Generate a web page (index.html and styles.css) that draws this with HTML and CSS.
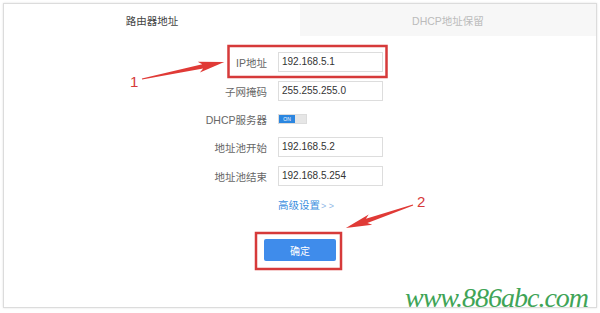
FILE: index.html
```html
<!DOCTYPE html>
<html>
<head>
<meta charset="utf-8">
<link rel="stylesheet" href="styles.css">
</head>
<body>
<div class="page">
  <div class="frame">
    <div class="tabs">
      <div class="tab active">路由器地址</div>
      <div class="tab">DHCP地址保留</div>
    </div>
    <div class="form">
      <label class="lbl">IP地址</label><div class="input">192.168.5.1</div>
      <label class="lbl">子网掩码</label><div class="input">255.255.255.0</div>
      <label class="lbl">DHCP服务器</label><div class="toggle"><span class="on">ON</span></div>
      <label class="lbl">地址池开始</label><div class="input">192.168.5.2</div>
      <label class="lbl">地址池结束</label><div class="input">192.168.5.254</div>
      <span></span><a class="link">高级设置<span class="gt">&gt; &gt;</span></a>
    </div>
    <div class="actions"><button class="btn">确定</button></div>
  </div>
  <svg class="annot" width="600" height="313" viewBox="0 0 600 313">
    <rect x="228.5" y="46" width="158" height="31" fill="none" stroke="#d63a3a" stroke-width="2.5"/>
    <rect x="256" y="233" width="85" height="36" fill="none" stroke="#d63a3a" stroke-width="2.5"/>
    <polygon transform="translate(142,79) rotate(-11.7)" points="0,-0.6 62,-2.2 58,-5.5 84,0 58,5.5 62,2.2 0,0.6" fill="#e03a36"/>
    <polygon transform="translate(413,205) rotate(161)" points="0,-0.6 49,-2.2 45,-5.5 71,0 45,5.5 49,2.2 0,0.6" fill="#e03a36"/>
    <text x="130" y="87" class="num">1</text>
    <text x="417" y="207" class="num">2</text>
  </svg>
  <span class="watermark">www.886abc.com</span>
</div>
</body>
</html>
```
FILE: styles.css
```css
body {
  margin: 0;
  background: #fff;
  font-family: "Liberation Sans", "Noto Sans CJK SC", sans-serif;
}
.page {
  position: relative;
  width: 600px;
  height: 313px;
  padding: 3px 3px 0;
  box-sizing: border-box;
  overflow: hidden;
}
.frame {
  height: 305px;
  border: 1px solid #dcdcdc;
  box-shadow: 0 0 2px rgba(0, 0, 0, 0.12);
  box-sizing: border-box;
}
.tabs {
  display: flex;
  height: 32px;
}
.tab {
  flex: 1;
  display: flex;
  align-items: center;
  justify-content: center;
  font-size: 10.5px;
  color: #bbb;
  background: #f7f7f7;
}
.tab.active {
  background: #fff;
  color: #444;
}
.form {
  display: grid;
  grid-template-columns: 263px 105px;
  grid-template-rows: 20px 20px 18px 20px 20px 18px;
  column-gap: 11px;
  row-gap: 9px;
  padding-top: 16px;
  align-items: center;
}
.lbl {
  text-align: right;
  font-size: 10.5px;
  color: #666;
}
.input {
  height: 20px;
  border: 1px solid #ddd;
  box-sizing: border-box;
  padding: 0 3px;
  font-size: 10px;
  line-height: 18px;
  color: #333;
}
.toggle {
  width: 29px;
  height: 10px;
  background: #e6e6e6;
  border: 1px solid #dcdcdc;
  box-sizing: border-box;
  display: flex;
}
.toggle .on {
  width: 16px;
  background: #2b86e0;
  color: #fff;
  font-size: 5px;
  line-height: 8px;
  text-align: center;
}
.link {
  font-size: 10.5px;
  color: #3d8fe0;
}
.link .gt {
  color: #8fb8e6;
  font-size: 9px;
  margin-left: 1px;
}
.actions {
  display: flex;
  justify-content: center;
  padding-top: 26px;
}
.btn {
  width: 72px;
  height: 22px;
  background: #3f8ceb;
  border: 0;
  border-radius: 2px;
  color: #fff;
  font-family: inherit;
  font-size: 10px;
  padding: 0;
}
.annot {
  position: absolute;
  left: 0;
  top: 0;
  pointer-events: none;
}
.num {
  font-family: "Liberation Sans", sans-serif;
  font-size: 15px;
  fill: #d63a3a;
}
.watermark {
  position: absolute;
  left: 405px;
  top: 284px;
  font-family: "Liberation Serif", serif;
  font-style: italic;
  font-size: 28px;
  line-height: 1;
  letter-spacing: -1px;
  color: #3fa457;
}
```
